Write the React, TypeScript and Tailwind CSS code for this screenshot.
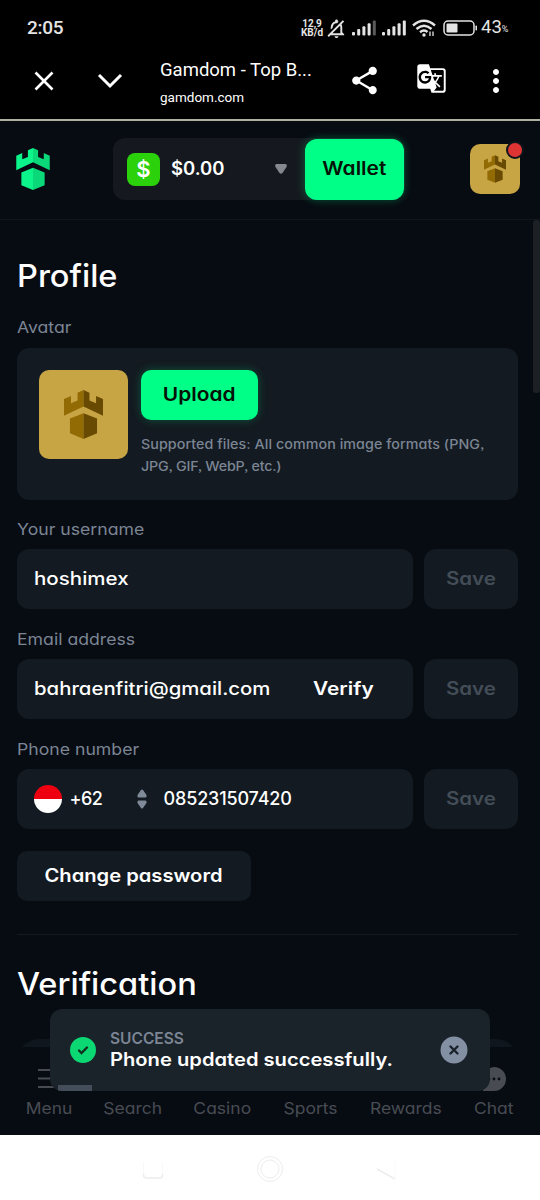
import type { ReactNode } from "react";
import {
  MdGTranslate,
  MdMoreVert,
  MdOutlineNotificationsOff,
  MdShare,
} from "react-icons/md";

type CastleProps = { className: string; left: string; right: string };

function Castle({ className, left, right }: CastleProps) {
  return (
    <svg viewBox="0 0 118 148" className={className}>
      <path
        fill={left}
        d="M0 27 21 18V40L41 32V8L59 0V50L0 78ZM18 86 59 70V148L18 131Z"
      />
      <path
        fill={right}
        d="M118 27 97 18V40L77 32V8L59 0V50L118 78ZM100 86 59 70V148L100 131Z"
      />
    </svg>
  );
}

function Signal({ dimLast }: { dimLast?: boolean }) {
  return (
    <svg viewBox="0 0 24 16" className="h-4 w-6">
      {[0, 1, 2, 3, 4].map((i) => (
        <rect
          key={i}
          x={i * 5.2}
          y={12 - i * 2.9}
          width="3"
          height={3.5 + i * 2.9}
          rx="1"
          fill={dimLast && i === 4 ? "#5a5a5a" : "#e4e4e4"}
        />
      ))}
    </svg>
  );
}

function StatusBar() {
  return (
    <div className="flex h-[42px] items-center pt-[14px] pl-[27px] font-[Roboto] text-[#e4e4e4]">
      <span className="w-[274px] text-[19px] font-medium tracking-[-0.3px]">2:05</span>
      <div className="w-[22px] text-center text-[10px] leading-[9px] font-bold">
        12,9
        <br />
        KB/d
      </div>
      <MdOutlineNotificationsOff className="ml-0.5 size-[23px] -scale-x-100" />
      <div className="ml-1 flex gap-1.5">
        <Signal dimLast />
        <Signal />
      </div>
      <svg viewBox="0 0 24 18" className="ml-1.5 h-[18px] w-6" fill="none" stroke="currentColor" strokeWidth="2.4">
        <path d="M1 6.5Q12-3 23 6.5M4.500 10Q12 3.500 19.500 10M8 13.200Q12 10 15.500 13" />
        <circle cx="12" cy="16" r="1.700" fill="currentColor" stroke="none" />
        <path d="M18 12.500v4.500M21 12.500v4.500" strokeWidth="1.300" />
      </svg>
      <svg viewBox="0 0 35 16" className="ml-[7px] h-4 w-[35px]">
        <rect x="1" y="1" width="30" height="14" rx="4" fill="none" stroke="#e4e4e4" strokeWidth="1.500" />
        <rect x="3.500" y="3.500" width="11" height="9" rx="1" fill="#e4e4e4" />
        <rect x="32.500" y="5.500" width="1.500" height="5" rx=".7" fill="#e4e4e4" />
      </svg>
      <span className="ml-[3px] text-[18.500px]">43</span>
      <span className="mt-1 text-[9px]">%</span>
    </div>
  );
}

function BrowserBar() {
  return (
    <div className="flex h-[77px] items-center font-[Roboto] text-white">
      <svg viewBox="0 0 20 20" className="ml-[34px] size-5" stroke="currentColor" strokeWidth="2.600">
        <path d="m1.500 1.500 17 17M18.500 1.500l-17 17" />
      </svg>
      <svg viewBox="0 0 26 16" className="ml-[43px] h-4 w-[26px]" fill="none" stroke="currentColor" strokeWidth="3">
        <path d="m2 2 11 11L24 2" />
      </svg>
      <div className="ml-[37px] w-[188px] pt-[4px]">
        <div className="text-[18.500px] leading-7">Gamdom - Top B...</div>
        <div className="text-[13.500px] leading-[26px]">gamdom.com</div>
      </div>
      <MdShare className="size-[33px]" />
      <MdGTranslate className="mb-1 ml-[35px] size-[31px]" />
      <MdMoreVert className="ml-[31px] size-[36px]" />
    </div>
  );
}

function SiteHeader() {
  return (
    <header className="flex h-[99px] items-center border-b border-[#10161e] pb-0.5 pl-4">
      <Castle className="h-[42px] w-[34px]" left="#0bf58a" right="#0bd878" />
      <div className="ml-[63px] flex h-[62px] w-[292px] items-center rounded-xl bg-[#15191f] pl-[14px]">
        <div className="flex size-[33px] items-center justify-center rounded-lg bg-[#2bd10b] text-[22px] font-semibold">
          $
        </div>
        <span className="ml-[11px] w-[104px] text-[18.500px] font-semibold">$0.00</span>
        <svg viewBox="0 0 12 10" className="h-2.5 w-3" fill="#85898f">
          <path d="M1.500 0h9Q12.500 .3 11.500 3L7.500 9Q6 10.500 4.500 9L.5 3Q-.5.3 1.500 0Z" />
        </svg>
        <button className="ml-[18px] h-[61px] w-[99px] shrink-0 rounded-xl bg-[#00ff86] text-[18.500px] font-semibold text-[#041207] shadow-[0_0_10px_#00ff8650]">
          <span className="inline-block scale-x-113">Wallet</span>
        </button>
      </div>
      <div className="relative ml-[65px] flex size-[50px] items-center justify-center rounded-[10px] bg-[#c8a544]">
        <Castle className="h-7 w-[22px]" left="#936b04" right="#694a02" />
        <span className="absolute -top-px -right-0.5 size-[14px] rounded-full bg-[#df3434] ring-2 ring-[#10141b]" />
      </div>
    </header>
  );
}

function SaveButton() {
  return (
    <button className="h-[60px] w-[94px] rounded-xl bg-[#131a21] pb-0.5 text-[18px] font-semibold text-[#434d58]">
      <span className="inline-block scale-x-114">Save</span>
    </button>
  );
}

function Label({ children }: { children: ReactNode }) {
  return (
    <div className="origin-left scale-x-107 text-[16.500px] leading-6 text-[#7b8594]">{children}</div>
  );
}

function Field({ label, children }: { label: string; children: ReactNode }) {
  return (
    <div>
      <Label>{label}</Label>
      <div className="mt-2 flex gap-[11px]">
        <div className="flex h-[60px] w-[396px] items-center rounded-xl bg-[#131a21] pb-0.5 pl-[17px] text-[18px] font-medium">
          {children}
        </div>
        <SaveButton />
      </div>
    </div>
  );
}

function Profile() {
  return (
    <main className="relative h-[827px] overflow-hidden pt-9 pr-[22.5px] pl-[16.5px]">
      <h1 className="origin-left scale-x-105 text-[31px] leading-10 font-medium">Profile</h1>
      <div className="mt-[19px]">
        <Label>Avatar</Label>
      </div>
      <section className="mt-[9px] flex h-[152px] gap-[13px] rounded-xl bg-[#131a21] pt-[22px] pl-[22px]">
        <div className="flex size-[89px] items-center justify-center rounded-[10px] bg-[#c8a544]">
          <Castle className="h-[49px] w-[39px]" left="#936b04" right="#694a02" />
        </div>
        <div>
          <button className="h-[50px] w-[117px] rounded-[10px] bg-[#00ff86] text-[18.500px] font-semibold text-[#041207] shadow-[0_0_10px_#00ff8640]">
            <span className="inline-block scale-x-113">Upload</span>
          </button>
          <p className="mt-[13px] origin-left scale-x-110 text-[13px] leading-[22px] font-medium tracking-[0.050px] whitespace-nowrap text-[#7b8594]">
            Supported files: All common image formats (PNG,
            <br />
            <span className="tracking-[-0.2px]">JPG, GIF, WebP, etc.)</span>
          </p>
        </div>
      </section>

      <div className="mt-[17px] flex flex-col gap-[18px]">
        <Field label="Your username">
          <span className="origin-left scale-x-114">hoshimex</span>
        </Field>
        <Field label="Email address">
          <span className="w-[279px]">
            <span className="inline-block origin-left scale-x-113">bahraenfitri@gmail.com</span>
          </span>
          <span className="origin-left scale-x-116 font-semibold">Verify</span>
        </Field>
        <Field label="Phone number">
          <span className="mt-0.5 h-7 w-7 rounded-full bg-linear-to-b from-[#ee0010] from-50% to-white to-50%" />
          <span className="ml-2 w-[67px] tracking-[-0.5px]">+62</span>
          <svg viewBox="0 0 10 20" className="mt-0.5 h-5 w-2.5" fill="#7f8a99">
            <path d="M4 1Q5 0 6 1L9.500 6Q10 8.500 8.500 8.500H1.500Q0 8.500.5 6ZM4 19Q5 20 6 19L9.500 14Q10 11.500 8.500 11.500H1.500Q0 11.500.5 14Z" />
          </svg>
          <span className="ml-[17px] tracking-[-0.15px]">085231507420</span>
        </Field>
      </div>

      <button className="mt-[22px] block h-[50px] w-[234px] rounded-[10px] bg-[#131a21] pb-0.5 text-[18px] font-semibold">
        <span className="inline-block scale-x-112">Change password</span>
      </button>
      <hr className="mt-[33px] border-[#141a21]" />
      <h2 className="mt-[29px] origin-left scale-x-105 text-[31px] leading-10 font-medium">Verification</h2>
      <section className="mt-[35px] h-40 rounded-[22px] bg-[#10161d]" />
      <div className="absolute top-0 right-0 h-[173px] w-[7px] rounded-[3px] bg-[#1c2025]" />
    </main>
  );
}

function NavText({ children }: { children: ReactNode }) {
  return <span className="inline-block scale-x-106">{children}</span>;
}

const links = [
  { name: "Search", width: "w-[84px]" },
  { name: "Casino", width: "w-[94px]" },
  { name: "Sports", width: "w-[82px]" },
  { name: "Rewards", width: "w-[110px]" },
];

function BottomNav() {
  return (
    <nav className="flex h-[88px] pl-[7px] text-center text-[16.500px] leading-6 text-[#484c52]">
      <div className="flex w-[84px] flex-col items-center">
        <svg viewBox="0 0 26 20" className="mt-[21px] h-5 w-[26px]" stroke="currentColor" strokeWidth="2">
          <path d="M2 2h24M2 10.500h24M2 19h24" />
        </svg>
        <span className="mt-2">
          <NavText>Menu</NavText>
        </span>
      </div>
      {links.map(({ name, width }) => (
        <div key={name} className={`${width} pt-[49px]`}>
          <NavText>{name}</NavText>
        </div>
      ))}
      <div className="flex w-[66px] flex-col items-center">
        <svg viewBox="0 0 24 24" className="mt-5 size-6">
          <path d="M12 0a12 12 0 0 1 0 24H1V12A12 12 0 0 1 12 0Z" fill="currentColor" />
          <g fill="#070b12">
            <circle cx="7" cy="12" r="1.400" />
            <circle cx="12" cy="12" r="1.400" />
            <circle cx="17" cy="12" r="1.400" />
          </g>
        </svg>
        <span className="mt-[5px]">
          <NavText>Chat</NavText>
        </span>
      </div>
    </nav>
  );
}

function Toast() {
  return (
    <div className="absolute top-[1009px] left-[50px] flex h-[82px] w-[440px] items-center overflow-hidden rounded-xl bg-[#1a222a] pr-[22px] pl-5">
      <svg viewBox="0 0 26 26" className="size-[26px]">
        <circle cx="13" cy="13" r="13" fill="#0bd873" />
        <path d="m9 13.500 2.500 2.500 5.500-5.500" fill="none" stroke="#12301f" strokeWidth="2.400" strokeLinecap="round" />
      </svg>
      <div className="ml-[14px] grow">
        <div className="origin-left text-[15.500px] leading-5 font-semibold text-[#7b8594]">SUCCESS</div>
        <div className="origin-left scale-x-112 text-[18px] leading-[22px] font-semibold whitespace-nowrap">
          Phone updated successfully.
        </div>
      </div>
      <svg viewBox="0 0 28 28" className="size-7">
        <circle cx="14" cy="14" r="13.500" fill="#8390a3" />
        <path d="m10.500 10.500 7 7M17.500 10.500l-7 7" stroke="#1a222a" strokeWidth="2.400" strokeLinecap="round" />
      </svg>
      <div className="absolute bottom-0 left-2 h-1.5 w-[34px] bg-[#434e5a]" />
    </div>
  );
}

function SystemNav() {
  return (
    <div className="h-[65px] bg-white">
      <svg viewBox="0 0 540 65" className="h-[65px] w-[540px]" fill="none" stroke="#ededed">
        <path d="M143.500 27v13q0 3 3 3h13q3 0 3-3V27" stroke="#f8f8f8" />
        <path d="M143.500 39v1q0 3 3 3h13q3 0 3-3v-1" strokeWidth="1.500" />
        <circle cx="270" cy="34" r="12.500" />
        <circle cx="270" cy="34" r="9" />
        <path d="m377 34 18 10" strokeWidth="1.500" />
        <path d="M395 44V26" stroke="#f8f8f8" />
      </svg>
    </div>
  );
}

export default function App() {
  return (
    <div className="relative h-[1200px] w-[540px] overflow-hidden bg-black font-[Inter,sans-serif] text-white [font-feature-settings:'cv11','ss03']">
      <StatusBar />
      <BrowserBar />
      <div className="h-[2px] bg-[#aeb1a0]" />
      <div className="bg-[#070b12]">
        <SiteHeader />
        <Profile />
        <BottomNav />
      </div>
      <SystemNav />
      <Toast />
    </div>
  );
}
